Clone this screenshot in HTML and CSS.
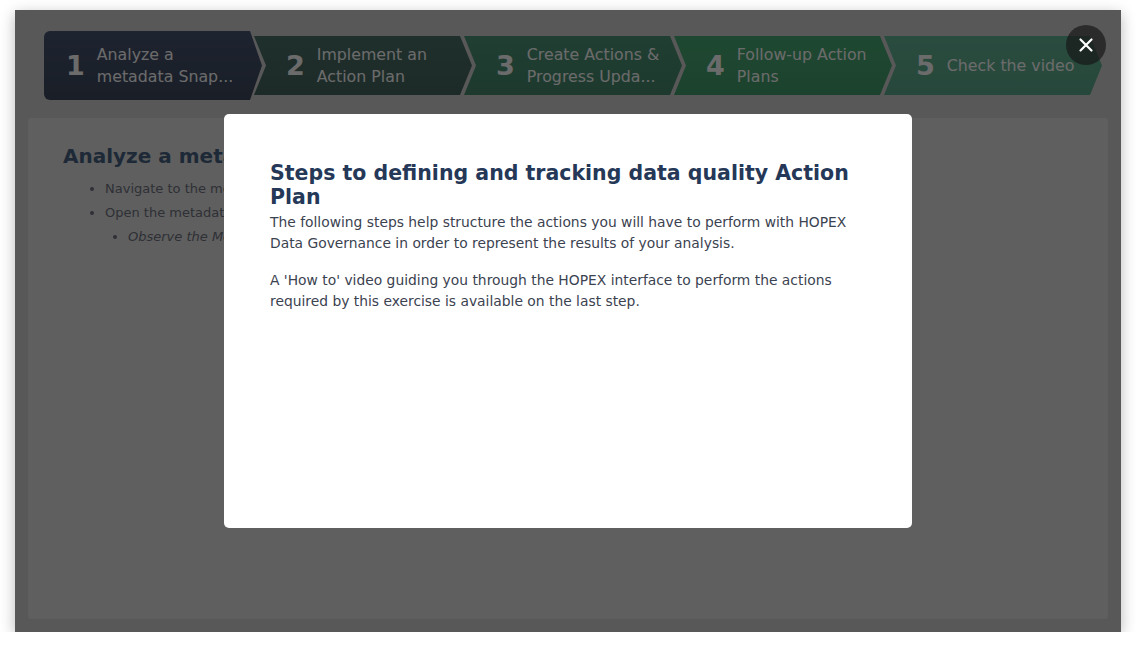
FILE: index.html
```html
<!DOCTYPE html>
<html lang="en">
<head>
<meta charset="utf-8">
<title>Action Plan</title>
<link rel="stylesheet" href="styles.css">
</head>
<body>
<div class="window">
  <div class="steps">
    <div class="step step-1"><span class="num">1</span><span class="label">Analyze a<br>metadata Snap...</span></div>
    <div class="step step-2"><span class="num">2</span><span class="label">Implement an<br>Action Plan</span></div>
    <div class="step step-3"><span class="num">3</span><span class="label">Create Actions &amp;<br>Progress Upda...</span></div>
    <div class="step step-4"><span class="num">4</span><span class="label">Follow-up Action<br>Plans</span></div>
    <div class="step step-5"><span class="num">5</span><span class="label">Check the video</span></div>
  </div>
  <div class="panel">
    <h2 class="panel-title">Analyze a metadata Snapshot</h2>
    <ul class="panel-list">
      <li>Navigate to the metadata snapshot</li>
      <li>Open the metadata snapshot
        <ul class="sub-list"><li><em>Observe the Metadata</em></li></ul>
      </li>
    </ul>
  </div>
  <div class="overlay"></div>
  <div class="modal">
    <h1 class="modal-title">Steps to defining and tracking data quality Action Plan</h1>
    <p class="modal-text">The following steps help structure the actions you will have to perform with HOPEX Data Governance in order to represent the results of your analysis.</p>
    <p class="modal-text">A 'How to' video guiding you through the HOPEX interface to perform the actions required by this exercise is available on the last step.</p>
  </div>
  <button class="close" aria-label="Close">
    <svg width="16" height="16" viewBox="0 0 16 16"><path d="M2.5 2.5 L13.5 13.5 M13.5 2.5 L2.5 13.5" stroke="#fff" stroke-width="2.2" stroke-linecap="round"/></svg>
  </button>
</div>
</body>
</html>
```

FILE: styles.css
```css
* { box-sizing: border-box; }
html, body { margin: 0; padding: 0; background: #fff; }
body { font-family: "DejaVu Sans", Verdana, sans-serif; }

.window {
  position: relative;
  margin: 10px 0 0 15px;
  width: 1106px;
  height: 622px;
  background: #c8c8c8;
  padding: 21px 13px 13px 13px;
  display: flex;
  flex-direction: column;
  box-shadow: 0 4px 14px rgba(0,0,0,0.28);
}

.steps {
  display: flex;
  align-items: center;
  height: 69px;
  margin-left: 16px;
  flex: none;
}
.step {
  width: 218px;
  height: 59px;
  display: flex;
  align-items: center;
  color: #f4f4f4;
  flex: none;
  margin-left: -8px;
  padding-left: 32px;
  clip-path: polygon(0 0, 206px 0, 218px 50%, 206px 100%, 0 100%, 12px 50%);
}
.step-1 {
  margin-left: 0;
  height: 69px;
  padding-left: 22px;
  border-radius: 6px 0 0 6px;
  clip-path: polygon(0 0, 206px 0, 218px 50%, 206px 100%, 0 100%);
  background: linear-gradient(#44526d, #3a4558);
}
.step-2 { background: linear-gradient(#486d66, #42625b); }
.step-3 { background: linear-gradient(#4a8e74, #448368); }
.step-4 { background: linear-gradient(#47a472, #409766); }
.step-5 { background: linear-gradient(#5fae91, #58a386); }

.num {
  font-weight: bold;
  font-size: 27px;
  margin-right: 12px;
}
.label {
  font-size: 15.8px;
  line-height: 22px;
  white-space: nowrap;
}

.panel {
  flex: 1;
  margin-top: 18px;
  background: #d8d8d8;
  border-radius: 3px;
  padding: 25px 35px;
  overflow: hidden;
  color: #6a6e7a;
}
.panel-title {
  margin: 0 0 8px;
  font-size: 20px;
  line-height: 26px;
  color: #465d7d;
  white-space: nowrap;
}
.panel-list {
  margin: 0;
  padding-left: 42px;
  font-size: 13px;
  line-height: 24px;
  white-space: nowrap;
}
.sub-list {
  margin: 0;
  padding-left: 23px;
  list-style: disc;
}

.overlay {
  position: absolute;
  inset: 0;
  background: rgba(0,0,0,0.56);
}

.modal {
  position: absolute;
  left: 209px;
  top: 104px;
  width: 688px;
  height: 414px;
  background: #fff;
  border-radius: 5px;
  padding: 47px 46px;
}
.modal-title {
  margin: 0 0 3px;
  font-size: 20.5px;
  line-height: 24px;
  font-weight: bold;
  color: #253858;
}
.modal-text {
  margin: 0 0 16px;
  font-size: 13.85px;
  line-height: 21px;
  color: #3b4250;
}

.close {
  position: absolute;
  left: 1051px;
  top: 15px;
  width: 40px;
  height: 40px;
  border-radius: 50%;
  border: none;
  background: rgba(22,22,22,0.68);
  display: flex;
  align-items: center;
  justify-content: center;
  padding: 0;
}
.close svg { display: block; }
```
